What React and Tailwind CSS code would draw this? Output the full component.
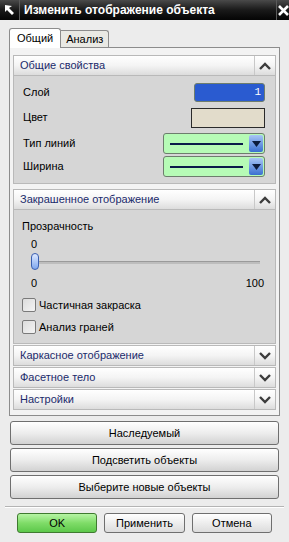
import { useState } from "react";

// Диалог NX "Изменить отображение объекта" — XP-стиль
const font = "font-['Liberation_Sans','Arial',sans-serif]";

function Chevron({ up }) {
  return (
    <svg width="12" height="8" viewBox="0 0 12 8">
      <path
        d={up ? "M1 7 L6 2 L11 7" : "M1 1 L6 6 L11 1"}
        fill="none"
        stroke="#3c3c3c"
        strokeWidth="2.4"
      />
    </svg>
  );
}

function SectionHeader({ title, open }) {
  return (
    <div className="flex h-[21px] border border-[#b9b9b9] bg-gradient-to-b from-white via-[#f4f4f4] to-[#dcdcdc]">
      <div className="flex-1 pl-[6px] flex items-center text-[11px] text-[#1b2a6b]">
        {title}
      </div>
      <div className="w-[21px] border-l border-[#c8c8c8] flex items-center justify-center">
        <Chevron up={open} />
      </div>
    </div>
  );
}

function LineSelect() {
  return (
    <div className="w-[102px] h-[21px] rounded-[3px] border border-[#6d7d6d] bg-[#b6fbb6] flex items-center">
      <div className="flex-1 px-[6px]">
        <div className="h-[2px] bg-[#0b1a4a]" />
      </div>
      <div className="w-[14px] h-[17px] mr-[1px] rounded-[2px] bg-gradient-to-b from-[#a9c6f5] to-[#3a6fd0] flex items-center justify-center">
        <svg width="9" height="6" viewBox="0 0 9 6">
          <path d="M0 0 L9 0 L4.5 6 Z" fill="#0c1c3c" />
        </svg>
      </div>
    </div>
  );
}

function CheckRow({ label }) {
  return (
    <div className="flex items-center gap-[3px] h-[22px]">
      <div className="w-[14px] h-[14px] rounded-[2px] border border-[#7a7a7a] bg-gradient-to-br from-[#dcdcdc] to-[#f4f4f4]" />
      <span className="text-[11px] text-black">{label}</span>
    </div>
  );
}

function BigButton({ children }) {
  return (
    <button className="h-[24px] w-full rounded-[3px] border border-[#6f6f6f] bg-gradient-to-b from-white via-[#ededed] to-[#d2d2d2] text-[11px] text-black">
      {children}
    </button>
  );
}

export default function App() {
  const [tab, setTab] = useState(0);

  return (
    <div className={`w-[289px] h-[542px] overflow-hidden bg-[#ececec] ${font} select-none`}>
      {/* заголовок окна */}
      <div className="h-[20px] flex bg-gradient-to-b from-[#4a4a4a] via-[#1a1a1a] to-[#050505] text-white">
        <div className="w-[20px] flex items-center justify-center border-r border-[#5a5a5a]">
          <svg width="12" height="12" viewBox="0 0 12 12">
            <path d="M1 1 L1 8 L3 6 L8 11 L10 9 L5 4 L8 2 Z" fill="white" />
          </svg>
        </div>
        <div className="flex-1 pl-[4px] flex items-center text-[12px] font-bold whitespace-nowrap">
          Изменить отображение объекта
        </div>
        <div className="w-[13px] flex items-center justify-center border-l border-[#5a5a5a]">
          <svg width="11" height="11" viewBox="0 0 11 11">
            <path d="M1 1 L10 10 M10 1 L1 10" stroke="white" strokeWidth="2.6" />
          </svg>
        </div>
      </div>

      {/* вкладки */}
      <div className="flex items-end h-[27px] pl-[9px]">
        <div
          onClick={() => setTab(0)}
          className={`h-[20px] px-[7px] flex items-center border border-b-0 border-[#8c8c8c] rounded-t-[3px] text-[11px] relative top-[1px] ${tab === 0 ? "bg-white" : "bg-white"}`}
        >
          Общий
        </div>
        <div
          onClick={() => setTab(1)}
          className="h-[17px] px-[5px] flex items-center border border-b-0 border-l-0 border-[#8c8c8c] rounded-tr-[3px] bg-[#e9e9e4] text-[11px]"
        >
          Анализ
        </div>
      </div>

      {/* панель вкладки */}
      <div className="mx-[9px] h-[369px] border border-[#8c8c8c] bg-[#f3f3f3] px-[3px] pt-[7px] flex flex-col">
        <SectionHeader title="Общие свойства" open />
        <div className="h-[108px] border border-t-0 border-[#b9b9b9] bg-[#d6d6d6] pl-[9px] pr-[10px] pt-[6px] text-[11px]">
          <div className="flex items-center justify-between h-[21px]">
            <span>Слой</span>
            <div className="w-[71px] h-[19px] rounded-[3px] border border-[#6d7d6d] bg-[#2a5bd0] text-white text-[11px] flex items-center justify-end pr-[3px] font-['Liberation_Mono',monospace]">
              1
            </div>
          </div>
          <div className="flex items-center justify-between h-[21px] mt-[4px]">
            <span>Цвет</span>
            <div className="w-[74px] h-[20px] border border-[#2a2a2a] bg-[#e2dccb]" />
          </div>
          <div className="flex items-center justify-between h-[21px] mt-[5px]">
            <span>Тип линий</span>
            <LineSelect />
          </div>
          <div className="flex items-center justify-between h-[21px] mt-[2px]">
            <span>Ширина</span>
            <LineSelect />
          </div>
        </div>

        <div className="mt-[5px]">
          <SectionHeader title="Закрашенное отображение" open />
        </div>
        <div className="h-[134px] border border-t-0 border-[#b9b9b9] bg-[#d6d6d6] pl-[8px] pr-[11px] pt-[9px] text-[11px]">
          <div className="h-[14px] leading-[14px]">Прозрачность</div>
          <div className="h-[14px] leading-[14px] mt-[4px] pl-[9px]">0</div>
          <div className="h-[20px] mt-[1px] relative flex items-center pl-[9px] pr-[4px]">
            <div className="flex-1 h-[3px] bg-[#bdbdbd] border-t border-[#9a9a9a]" />
            <div className="absolute left-[9px] top-[1px] w-[8px] h-[17px] rounded-[4px] border border-[#3a5fb0] bg-gradient-to-b from-[#dfeaff] to-[#7ea6ee]" />
          </div>
          <div className="flex justify-between h-[14px] leading-[14px] mt-[4px] pl-[9px]">
            <span>0</span>
            <span>100</span>
          </div>
          <div className="mt-[4px]">
            <CheckRow label="Частичная закраска" />
            <CheckRow label="Анализ граней" />
          </div>
        </div>

        <div className="mt-[1px] flex flex-col gap-[1px]">
          <SectionHeader title="Каркасное отображение" />
          <SectionHeader title="Фасетное тело" />
          <SectionHeader title="Настройки" />
        </div>
      </div>

      {/* кнопки действий */}
      <div className="mx-[10px] mt-[5px] flex flex-col gap-[3px]">
        <BigButton>Наследуемый</BigButton>
        <BigButton>Подсветить объекты</BigButton>
        <BigButton>Выберите новые объекты</BigButton>
      </div>

      <div className="mx-[5px] mt-[7px] h-[2px] border-t border-[#b4b4b4] border-b border-b-white" />

      <div className="flex px-[17px] mt-[5px] gap-[7px]">
        <button className="w-[83px] h-[20px] rounded-[3px] border border-[#3f7a30] bg-gradient-to-b from-[#b6f5a4] via-[#7fdc68] to-[#5cc84a] text-[11px]">
          OK
        </button>
        <button className="w-[83px] h-[20px] rounded-[3px] border border-[#6f6f6f] bg-gradient-to-b from-white to-[#dcdcdc] text-[11px]">
          Применить
        </button>
        <button className="w-[83px] h-[20px] rounded-[3px] border border-[#6f6f6f] bg-gradient-to-b from-white to-[#dcdcdc] text-[11px]">
          Отмена
        </button>
      </div>
    </div>
  );
}
